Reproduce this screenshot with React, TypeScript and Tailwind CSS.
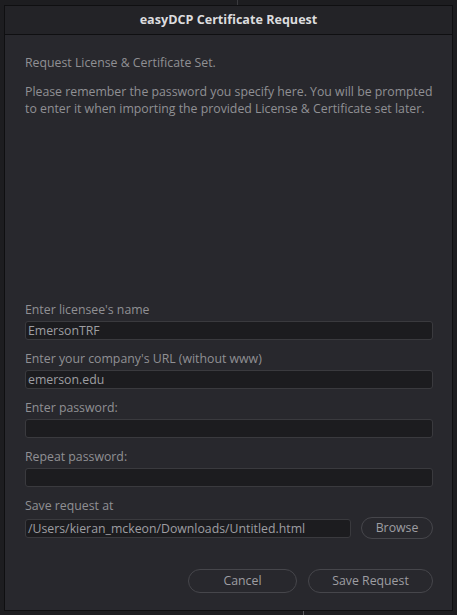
import React from 'react';

const font = { fontFamily: '"Open Sans", "Noto Sans", sans-serif' };

function Field({ label, value }: { label: string; value?: string }) {
  return (
    <div className="flex flex-col">
      <div className="h-[17px] leading-[17px] text-[12.3px] text-[#909094]">{label}</div>
      <div className="mt-[3px] h-[19px] rounded-[3px] border border-[#3a3a3e] bg-[#1c1c1f] pl-[2px] text-[12.3px] leading-[17px] text-[#9e9ea2]">
        {value}
      </div>
    </div>
  );
}

export default function App() {
  return (
    <div className="flex h-[615px] w-[457px] flex-col bg-[#1d1d20]" style={font}>
      {/* backdrop strip at the top */}
      <div className="flex h-[5px] shrink-0">
        <div className="w-[238px] border-r border-[#3a3a3e]" />
      </div>

      <div className="flex flex-1 px-[4px]">
        {/* dialog */}
        <div className="flex flex-1 flex-col border border-[#0f0f11] bg-[#28282d]">
          <div className="flex h-[29px] shrink-0 items-center justify-center border-b border-[#0f0f11] bg-[#232327] text-[12.6px] font-bold text-[#dcdcde]">
            easyDCP Certificate Request
          </div>

          <div className="flex flex-1 flex-col pl-[20px] pr-[19px] pt-[19px] pb-[17px]">
            <p className="text-[12.3px] leading-[17px] text-[#909094]">Request License &amp; Certificate Set.</p>
            <p className="mt-[12px] text-[12.3px] leading-[17px] text-[#909094]">
              Please remember the password you specify here. You will be prompted to enter it when importing the provided License &amp; Certificate set later.
            </p>

            <div className="flex-1" />

            <div className="flex flex-col gap-[10px]">
              <Field label="Enter licensee's name" value="EmersonTRF" />
              <Field label="Enter your company's URL (without www)" value="emerson.edu" />
              <Field label="Enter password:" />
              <Field label="Repeat password:" />
              <div className="flex flex-col">
                <div className="h-[17px] leading-[17px] text-[12.3px] text-[#909094]">Save request at</div>
                <div className="mt-[3px] flex h-[22px] items-center gap-[10px]">
                  <div className="h-[19px] flex-1 rounded-[3px] border border-[#3a3a3e] bg-[#1c1c1f] pl-[2px] text-[12.3px] leading-[17px] text-[#9e9ea2]">
                    /Users/kieran_mckeon/Downloads/Untitled.html
                  </div>
                  <button className="h-[22px] w-[72px] rounded-full border border-[#46464b] text-[12.3px] text-[#9e9ea2]">
                    Browse
                  </button>
                </div>
              </div>
            </div>

            <div className="mt-[30px] flex justify-end gap-[11px]">
              <button className="h-[24px] w-[109px] rounded-full border border-[#46464b] text-[12.3px] text-[#9e9ea2]">
                Cancel
              </button>
              <button className="h-[24px] w-[125px] rounded-full border border-[#46464b] text-[12.3px] text-[#9e9ea2]">
                Save Request
              </button>
            </div>
          </div>
        </div>
      </div>

      {/* backdrop strip at the bottom */}
      <div className="flex h-[4px] shrink-0">
        <div className="w-[304px] border-r border-[#5a5a5e]" />
      </div>
    </div>
  );
}
